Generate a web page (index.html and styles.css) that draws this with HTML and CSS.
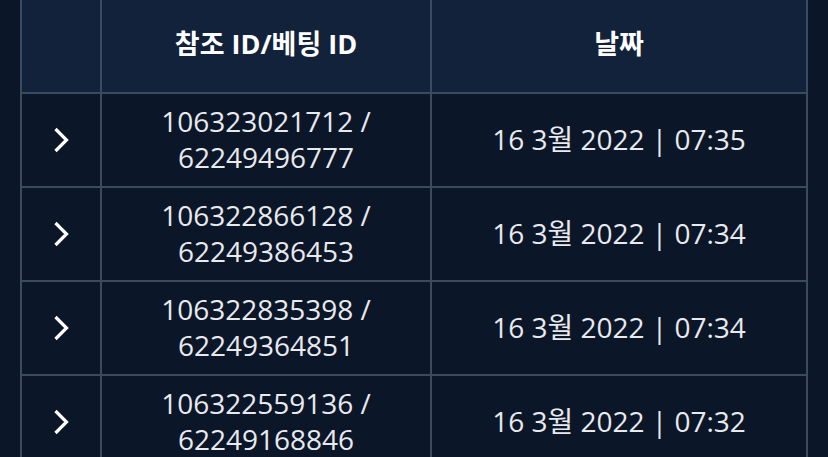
FILE: index.html
```html
<!DOCTYPE html>
<html lang="ko">
<head>
<meta charset="utf-8">
<link rel="stylesheet" href="styles.css">
</head>
<body>
<div class="page">
  <div class="table">
    <div class="cell head"></div>
    <div class="cell head">참조 ID/베팅 ID</div>
    <div class="cell head">날짜</div>

    <div class="cell arrow"><svg width="18" height="28" viewBox="0 0 18 28"><path d="M3.5 3 L14.5 14 L3.5 25" fill="none" stroke="#fff" stroke-width="3.2" stroke-linecap="butt" stroke-linejoin="miter"/></svg></div>
    <div class="cell">106323021712 /<br>62249496777</div>
    <div class="cell">16 3월 2022 | 07:35</div>

    <div class="cell arrow"><svg width="18" height="28" viewBox="0 0 18 28"><path d="M3.5 3 L14.5 14 L3.5 25" fill="none" stroke="#fff" stroke-width="3.2" stroke-linecap="butt" stroke-linejoin="miter"/></svg></div>
    <div class="cell">106322866128 /<br>62249386453</div>
    <div class="cell">16 3월 2022 | 07:34</div>

    <div class="cell arrow"><svg width="18" height="28" viewBox="0 0 18 28"><path d="M3.5 3 L14.5 14 L3.5 25" fill="none" stroke="#fff" stroke-width="3.2" stroke-linecap="butt" stroke-linejoin="miter"/></svg></div>
    <div class="cell">106322835398 /<br>62249364851</div>
    <div class="cell">16 3월 2022 | 07:34</div>

    <div class="cell arrow"><svg width="18" height="28" viewBox="0 0 18 28"><path d="M3.5 3 L14.5 14 L3.5 25" fill="none" stroke="#fff" stroke-width="3.2" stroke-linecap="butt" stroke-linejoin="miter"/></svg></div>
    <div class="cell">106322559136 /<br>62249168846</div>
    <div class="cell">16 3월 2022 | 07:32</div>
  </div>
</div>
</body>
</html>
```

FILE: styles.css
```css
html, body {
  margin: 0;
  padding: 0;
  background: #0b1628;
  overflow: hidden;
}
.page {
  padding: 0 20px;
  height: 457px;
}
.table {
  width: 788px;
  display: grid;
  grid-template-columns: 78px 328px 374px;
  grid-auto-rows: 92px;
  gap: 2px;
  padding: 0 2px 2px;
  box-sizing: border-box;
  background: #3b4a5e;
  font-family: "Open Sans", "Noto Sans CJK KR", sans-serif;
}
.cell {
  background: #0b1628;
  color: #e8eaee;
  font-size: 28px;
  line-height: 36px;
  display: flex;
  align-items: center;
  justify-content: center;
  text-align: center;
  padding-bottom: 3px;
  box-sizing: border-box;
}
.head {
  background: #13223b;
  color: #ffffff;
  font-weight: 700;
  font-size: 27px;
  padding-bottom: 5px;
}
.arrow {
  padding-bottom: 0;
}
.arrow svg {
  display: block;
}
```
